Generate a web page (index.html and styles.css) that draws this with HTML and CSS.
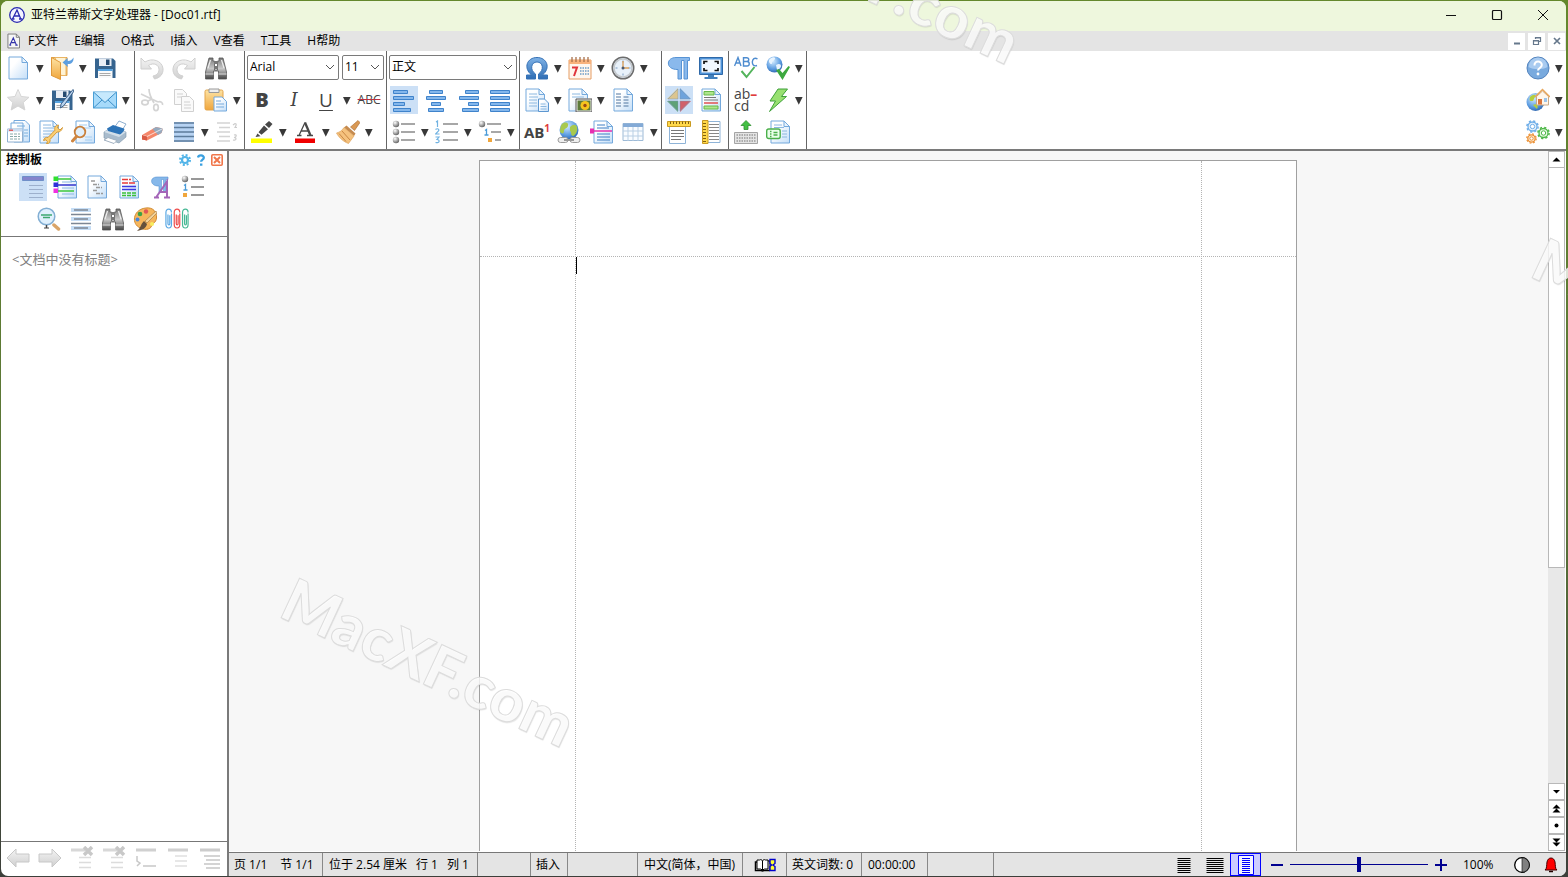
FILE: index.html
```html
<!DOCTYPE html>
<html lang="zh-CN">
<head>
<meta charset="utf-8">
<title>亚特兰蒂斯文字处理器 - [Doc01.rtf]</title>
<link rel="stylesheet" href="styles.css">
</head>
<body>
<svg class="sprite" aria-hidden="true">
  <defs>
    <linearGradient id="gp" x1="0" y1="0" x2="1" y2="1"><stop offset=".3" stop-color="#fff"/><stop offset="1" stop-color="#c3def8"/></linearGradient>
    <linearGradient id="gb" x1="0" y1="0" x2="0" y2="1"><stop offset="0" stop-color="#7fb2e6"/><stop offset="1" stop-color="#2e6db4"/></linearGradient>
    <linearGradient id="gg" x1="0" y1="0" x2="0" y2="1"><stop offset="0" stop-color="#f4f4f4"/><stop offset="1" stop-color="#cfcfcf"/></linearGradient>
    <linearGradient id="go" x1="0" y1="0" x2="0" y2="1"><stop offset="0" stop-color="#fde3a4"/><stop offset="1" stop-color="#f0a63c"/></linearGradient>
    <linearGradient id="gm" x1="0" y1="0" x2="0" y2="1"><stop offset="0" stop-color="#777"/><stop offset=".5" stop-color="#c8c8c8"/><stop offset="1" stop-color="#444"/></linearGradient>
    <radialGradient id="gs" cx=".35" cy=".3" r=".8"><stop offset="0" stop-color="#fff"/><stop offset=".6" stop-color="#9a9a9a"/><stop offset="1" stop-color="#555"/></radialGradient>
    <radialGradient id="gw" cx=".4" cy=".3" r=".8"><stop offset="0" stop-color="#d4ecff"/><stop offset=".6" stop-color="#5b9be0"/><stop offset="1" stop-color="#2458a0"/></radialGradient>
  </defs>
  <symbol id="dd" viewBox="0 0 9 10"><path d="M1 1h7.600L4.800 8.800z" fill="#383838"/></symbol>
  <symbol id="chev" viewBox="0 0 10 6"><path d="M1 1l4 4 4-4" fill="none" stroke="#555"/></symbol>
  <symbol id="appico" viewBox="0 0 18 18"><circle cx="9" cy="9" r="7.300" fill="#f4f4ff" stroke="#2a2ab0" stroke-width="1.300"/><path d="M4.500 13L9 4l3.800 9M6.500 10h5M3.500 13h3M11 13h3.300" fill="none" stroke="#2a2ab0" stroke-width="1.300"/></symbol>
  <symbol id="docico" viewBox="0 0 14 16"><path d="M1 .5h9l3.500 3.500v11.500H1z" fill="#f6f6f6" stroke="#777"/><path d="M10 .5V4h3.500" fill="none" stroke="#777"/><path d="M3 12.500L6.800 4.500l3.400 8M4.800 9.800h4.500M2.500 12.500h2M9 12.500h2.500" fill="none" stroke="#3333aa" stroke-width="1.200"/></symbol>
  <symbol id="page" viewBox="0 0 24 24"><path d="M2 1h13l5.500 5.500V23H2z" fill="url(#gp)" stroke="#74a9dc"/><path d="M15 1v5.500h5.500z" fill="#e8f3fd" stroke="#74a9dc"/></symbol>
  <symbol id="open" viewBox="0 0 24 24"><path d="M1.500 1.500H17v18H1.500z" fill="url(#go)" stroke="#e0a04a"/><path d="M5 1.500h11v18H11z" fill="#fff3d4" stroke="#e9b565"/><path d="M1.500 1.500l9 5V23.500l-9-4z" fill="url(#go)" stroke="#e0993a"/><path d="M23.500 1.500c.5 5-3 7-6 6.500l.5 3L12.500 6.500 17.500 2l.2 3c2.500 0 4.500-1 5.800-3.500z" fill="#5d9fe0"/></symbol>
  <symbol id="save" viewBox="0 0 24 24"><path d="M2 2.500h18l2.500 2.500v17H2z" fill="#36648f"/><path d="M6 2.500h12.500v7.500H6z" fill="#e9eef5"/><path d="M13 3.500h3.500v5.500H13z" fill="#254a70"/><path d="M5 13h14.500v9H5z" fill="#fafafa"/><path d="M5 13h14.500v2H5z" fill="#58a4e0"/><path d="M6.500 17.500h11M6.500 19.500h11" stroke="#aaa"/></symbol>
  <symbol id="star" viewBox="0 0 24 24"><path d="M11 1.500l3.200 7 7.800.8-5.800 5.200 1.700 7.500L11 18l-6.800 4 1.600-7.500L.5 9.300l7.500-.8z" fill="url(#gg)" stroke="#d4d4d4"/></symbol>
  <symbol id="saveas" viewBox="0 0 24 24"><use href="#save"/><path d="M23 1.500l1 1.500L14 17.500l-3.500 2.500.5-4z" fill="#b9d3ee" stroke="#3b5f88"/></symbol>
  <symbol id="mail" viewBox="0 0 24 24"><path d="M.5 4h23v16H.500z" fill="#a6dafa" stroke="#4a9fd6"/><path d="M.5 4L12 14.500 23.500 4M.5 20L9 12M23.500 20L15 12" fill="#d6effd" fill-opacity=".7" stroke="#3d8fc8"/></symbol>
  <symbol id="docs" viewBox="0 0 24 24"><path d="M7 .5h11l4.500 4.500v17H7z" fill="url(#gp)" stroke="#74a9dc"/><path d="M4 3h12v18H4z" fill="url(#gp)" stroke="#74a9dc"/><path d="M.5 9h15v13H.500z" fill="#fff" stroke="#90b0d0"/><path d="M.5 9h15v2.500H.500z" fill="#c9dcf0"/><path d="M2 10.200h4" stroke="#e06060" stroke-width="1.500"/><path d="M3 14h10M3 16.500h10M3 19h10" stroke="#8aa" stroke-dasharray="3 1"/><path d="M10 6h8M17 10h4M17 13h4M17 16h4" stroke="#7bb0de"/></symbol>
  <symbol id="doctool" viewBox="0 0 24 24"><use href="#page" x="-1"/><path d="M4 5h8M4 8h11M4 11h12M4 14h9M4 17h6" stroke="#8cb8e0"/><path d="M23.500 7.500l-2.500 2.500-2.500-2 1-3c-3.500.3-4.500 3-3.500 5.200L9 17.500c-2-.5-4 .5-4.500 3l2.500-.7 1.500 2-1 2c3 0 4-2.300 3.500-4.300l7-7.500c2.500.5 5-1.500 5.500-4.500z" fill="#fbcf73" stroke="#d59a38"/></symbol>
  <symbol id="preview" viewBox="0 0 24 24"><use href="#page" x="3"/><path d="M8 5h8M8 8h12M14 17h7M14 20h7" stroke="#a4cdf0"/><circle cx="9" cy="12" r="5.300" fill="#e0effb" stroke="#c9803c" stroke-width="1.800"/><path d="M5.500 16.500L1.500 21" stroke="#d08640" stroke-width="3" stroke-linecap="round"/></symbol>
  <symbol id="print" viewBox="0 0 24 24"><path d="M11 8l5-7 7 3-5 8z" fill="#fff" stroke="#8fb0d0"/><path d="M1 12l7-4 15 4v5l-7 6-15-5z" fill="#a9bccd" stroke="#7c93a8" stroke-width=".6"/><path d="M1 12l7-4 15 4-7 5z" fill="#d3dfe9"/><path d="M4 8.500L10 5l11 3.500c1 1 0 3-4 6L5 11z" fill="#2d74b8"/><path d="M5 17.500l9 3-3 3-10-3.500z" fill="#fff" stroke="#a0b0c0"/></symbol>
  <symbol id="undo" viewBox="0 0 24 24"><path d="M1 2v11h10.500L8.500 9.500C14 6 19 9 19 13.500c0 4-3 6-6 6.500l1.500 3C20 22 23.500 18 23 12.500 22 4.500 12 1.500 5 6z" fill="url(#gg)" stroke="#cfcfcf"/></symbol>
  <symbol id="redo" viewBox="0 0 24 24"><path d="M23 2v11H12.500l3-3.500C10 6 5 9 5 13.500c0 4 3 6 6 6.500l-1.500 3C4 22 .5 18 1 12.500 2 4.500 12 1.500 19 6z" fill="url(#gg)" stroke="#cfcfcf"/></symbol>
  <symbol id="binoc" viewBox="0 0 24 24"><path d="M5 2h4v3h1.500v9h3V5H15V2h4l3.500 14v7h-8v-8h-5v8h-8v-7z" fill="url(#gm)" stroke="#555" stroke-width=".8"/><path d="M10 5h4v3h-4zM10 10h4v3h-4z" fill="#777"/><path d="M4 12L6.500 4M20 12L17.500 4" stroke="#eee" stroke-width="1.200"/><path d="M1.500 18h8M14.500 18h8" stroke="#ddd"/></symbol>
  <symbol id="cut" viewBox="0 0 24 24"><g fill="none" stroke="#d4d4d4" stroke-width="1.700"><path d="M9 1c0 5 2 9 5 14M1 6l17 8"/><ellipse cx="5" cy="14.500" rx="3.200" ry="2.300"/><ellipse cx="16" cy="19.500" rx="2.300" ry="3.200"/><path d="M8 13l4-2M18 14c3-1 5 1 4.500 3"/></g></symbol>
  <symbol id="copy" viewBox="0 0 24 24"><g fill="#fafafa" stroke="#d0d0d0"><path d="M2.500 1.500h8l4 4v11h-12z"/><path d="M9.500 8.500h8l4 4v11h-12z"/><path d="M5 6h6M5 9h4M12 14h6M12 17h7M12 20h7"/></g></symbol>
  <symbol id="paste" viewBox="0 0 24 24"><rect x="1" y="2" width="18" height="20" rx="1.500" fill="url(#go)" stroke="#e3a54c"/><path d="M5 1h10v3.500H5z" fill="#eee" stroke="#999"/><path d="M10 9h8l4.500 4.500V23H10z" fill="url(#gp)" stroke="#74a9dc"/><path d="M12 13h5M12 16h8M12 19h8" stroke="#74a9dc"/></symbol>
  <symbol id="eraser" viewBox="0 0 24 24"><path d="M2 15L16 7l7 1.500-1.500 4.500L7 20.500l-5-1z" fill="#f5876a"/><path d="M16 7l-3.500 2 5.500 6 3.500-2L23 8.500z" fill="#96a9bd"/><path d="M2 15l5 1.500L23 8.500" fill="none" stroke="#fff" opacity=".7"/><path d="M2 15l5 1.500v4l-5-1z" fill="#d95b45"/></symbol>
  <symbol id="lines" viewBox="0 0 24 24"><path d="M2 2h20v20H2z" fill="#b7d3f3"/><path d="M2 3h20M2 7.500h20M2 12h20M2 16.500h20M2 21h20" stroke="#5d7c9c" stroke-width="1.500"/></symbol>
  <symbol id="sort" viewBox="0 0 24 24"><path d="M2 3h13M4 7.500h11M2 12h13M4 16.500h11M2 21h13" stroke="#d4d4d4" stroke-width="1.600"/><path d="M18 5l2-1.500c2 0 1 2.500 0 4h2M19 15c3-1 3 2 0 2.500 3 0 2.500 3.500-1 2.500" fill="none" stroke="#ccc" stroke-width="1.200"/></symbol>
  <symbol id="hilite" viewBox="0 0 24 24"><path d="M1 18.500h21v4.500H1z" fill="#ffff00"/><path d="M19 1l3.500 3-3.500 4-4-3.500zM14 5.500l4 3.700-6.500 5.600-3-2.600zM7.500 13.500l3 2.700-5 .8z" fill="#484848"/></symbol>
  <symbol id="fcolor" viewBox="0 0 24 24"><path d="M2 18.500h20v4.500H2z" fill="#f00000"/><path d="M6 15.500L12 2.500M8 11h7.500M4 15.500h4.500M14 15.500H20" fill="none" stroke="#484848" stroke-width="1.300"/><path d="M12 2.500l5.500 13" stroke="#484848" stroke-width="2.300"/></symbol>
  <symbol id="brush" viewBox="0 0 24 24"><path d="M22 .5l2 2-5.500 8-4-3.500z" fill="#d99853" stroke="#aa6a30" stroke-width=".6"/><path d="M10.500 5.500l9 8-1.500 2.500L8 7.500z" fill="#c58b50"/><path d="M8 7.500l10 8.500-5.500 7.500C8 22 3 18 .5 13 4 12 6 10.500 8 7.500z" fill="#f5c27e" stroke="#d99a50" stroke-width=".6"/><path d="M3 13.500l7 8M6 11l8 9" stroke="#c98845"/></symbol>
  <symbol id="al" viewBox="0 0 24 24"><g fill="#84b7ec" stroke="#3f83cb"><path d="M1.500 2.500h14v3h-14zM1.500 8.500h20v3h-20zM1.500 14.500h11v3h-11zM1.500 20.500h17v3h-17z"/></g></symbol>
  <symbol id="ac" viewBox="0 0 24 24"><g fill="#84b7ec" stroke="#3f83cb"><path d="M5.500 2.500h13v3h-13zM2.500 8.500h19v3h-19zM7.500 14.500h9v3h-9zM4.500 20.500h15v3h-15z"/></g></symbol>
  <symbol id="ar" viewBox="0 0 24 24"><g fill="#84b7ec" stroke="#3f83cb"><path d="M9.500 2.500h13v3h-13zM3.500 8.500h19v3h-19zM12.500 14.500h10v3h-10zM6.500 20.500h16v3h-16z"/></g></symbol>
  <symbol id="aj" viewBox="0 0 24 24"><g fill="#84b7ec" stroke="#3f83cb"><path d="M2.500 2.500h19v3h-19zM2.500 8.500h19v3h-19zM2.500 14.500h19v3h-19zM2.500 20.500h19v3h-19z"/></g></symbol>
  <symbol id="bul" viewBox="0 0 24 24"><circle cx="4" cy="4" r="3.200" fill="url(#gs)"/><circle cx="4" cy="12" r="3.200" fill="url(#gs)"/><circle cx="4" cy="20" r="3.200" fill="url(#gs)"/><path d="M9 4h14M9 12h14M9 20h14" stroke="#8a8a8a" stroke-width="1.700"/></symbol>
  <symbol id="num" viewBox="0 0 24 24"><path d="M1 2l1.500-1v6M.5 9.500c2-1.500 4-.5 3 1.500l-3 3h4M.5 17h3.500l-2 2.500c3 0 3 4-1.500 3" fill="none" stroke="#70b2e2" stroke-width="1.200"/><path d="M8 4h15M8 12h15M8 20h15" stroke="#8a8a8a" stroke-width="1.700"/></symbol>
  <symbol id="multi" viewBox="0 0 24 24"><circle cx="4" cy="4" r="3.200" fill="url(#gs)"/><path d="M9 4h14M13 12h10M17 20h6" stroke="#8a8a8a" stroke-width="1.700"/><path d="M7 10.500l1.500-1V15M6.500 15h4" fill="none" stroke="#4a9bd8" stroke-width="1.300"/><path d="M10 18h4v4h-4z" fill="#f0a63c"/></symbol>
  <symbol id="omega" viewBox="0 0 24 24"><path d="M1.500 23v-4h5C-2 12 2 1.500 12 1.500S26 12 17.500 19h5v4h-9v-5c6-4 4.500-12-1.500-12S4.500 14 10.500 18v5z" fill="url(#gb)" stroke="#3571b5"/></symbol>
  <symbol id="cal" viewBox="0 0 24 24"><path d="M1 4h22v19H1z" fill="#fff6ee" stroke="#e59c62"/><path d="M1 4h22v4H1z" fill="#f9b27c"/><path d="M4 1v5M8 1v5M12 1v5M16 1v5M20 1v5" stroke="#a8704c" stroke-width="1.300"/><path d="M4 11.500h5l-3 8.500" fill="none" stroke="#e0343c" stroke-width="2"/><path d="M12 12h9M12 15h9M12 18h9" stroke="#6d9dc8" stroke-width="1.500" stroke-dasharray="1.500 1"/></symbol>
  <symbol id="clock" viewBox="0 0 24 24"><circle cx="12" cy="12" r="10.700" fill="#e2edf8" stroke="#6c6c6c" stroke-width="1.600"/><circle cx="12" cy="12" r="9" fill="#e8f1fa" stroke="#c4c8cc" stroke-width="1.500"/><path d="M12 4.500v2M12 17.500v2M4.500 12h2M17.500 12h2" stroke="#7d9cc0"/><path d="M12 5v7h6" fill="none" stroke="#d9a05c" stroke-width="1.400"/><circle cx="12" cy="12" r="1.500" fill="#4a5a70"/></symbol>
  <symbol id="fields" viewBox="0 0 24 24"><use href="#page" x="-1"/><path d="M4 6h8M4 9h9M4 12h8M4 15h8M4 18h8" stroke="#8cb8e0"/><path d="M13.500 11h6l4 4v8.500h-10z" fill="url(#gp)" stroke="#5d97d0"/><path d="M15.500 16h5M15.500 18.500h6M15.500 21h6" stroke="#8cb8e0"/></symbol>
  <symbol id="pic" viewBox="0 0 24 24"><use href="#page" x="-1"/><path d="M4 6h8M4 9h12" stroke="#8cb8e0"/><path d="M8.500 11.500h15v12h-15z" fill="#5d7a3a" stroke="#eee" stroke-width="2"/><path d="M8 11h16v13H8z" fill="none" stroke="#555"/><circle cx="17" cy="17.500" r="4.500" fill="#f7c51e"/><circle cx="17" cy="17.500" r="1.700" fill="#9a4a14"/></symbol>
  <symbol id="cols" viewBox="0 0 24 24"><use href="#page" x="1"/><path d="M5 6h5M5 9h5M5 12h5M5 15h5M5 18h5M12.500 9h5M12.500 12h5M12.500 15h5M12.500 18h5" stroke="#51779f" stroke-width="1.200"/></symbol>
  <symbol id="globe" viewBox="0 0 24 24"><circle cx="12" cy="10" r="9.500" fill="url(#gw)"/><path d="M5 4c4-3 7-1 6 2s-4 2-4 5-2 3-4 1C3 8 4 5 5 4zM13 7c3-3 6-3 7 0s-1 8-4 9c-3-1-1-4-3-5z" fill="#a8c94e"/><g fill="none" stroke="#999"><rect x="1" y="17.500" width="10" height="5" rx="2.500" fill="#eee"/><rect x="13" y="17.500" width="10" height="5" rx="2.500" fill="#eee"/><path d="M7 20h10" stroke-width="2"/></g></symbol>
  <symbol id="brk" viewBox="0 0 24 24"><use href="#page" x="3"/><path d="M8 5h8M8 8h12M8 14h13M8 17h13M8 20h13" stroke="#3f7fc4"/><path d="M1 8.500h4v5H1z" fill="#e62fb0"/><path d="M4 11h19" stroke="#e62fb0" stroke-width="1.500"/></symbol>
  <symbol id="table" viewBox="0 0 24 24"><path d="M2 3.500h20v17H2z" fill="#f9fcff" stroke="#9dbad6"/><path d="M2 3.500h20v3.500H2z" fill="#83aad6"/><path d="M2 11h20M2 16h20M7 7v14M12 7v14M17 7v14" stroke="#b9cfe4"/></symbol>
  <symbol id="pilcrow" viewBox="0 0 24 24"><path d="M9 1.500h13.500v3h-2V23h-3.500V4.500h-2.500V23H11V13.500C-1.500 14-1.500 1.500 9 1.500z" fill="#8ab9ec" stroke="#5793d4"/></symbol>
  <symbol id="full" viewBox="0 0 24 24"><path d="M.5 1.500h23v17H.500z" fill="#4f93d8" stroke="#2f69a8"/><path d="M2.500 3.500h19v13h-19z" fill="#f2f8ff"/><path d="M5 8V5.500h3.500M15.500 5.500H19V8M19 12v2.500h-3.500M8.500 14.500H5V12" fill="none" stroke="#111" stroke-width="1.700"/><path d="M9 19h6v2.500H9zM5.500 21h13v2h-13z" fill="#4280bd"/></symbol>
  <symbol id="tri" viewBox="0 0 24 24"><path d="M11 0v11H0z" fill="#dcc58f"/><path d="M13 0v11h11z" fill="#6ea3dc"/><path d="M11 24V13H0z" fill="#5fa276"/><path d="M13 24V13h11z" fill="#d0606a"/><path d="M11 1v10H1zM13 1v10h10zM11 23V13H1zM13 23V13h10z" fill="none" stroke="#7b96b3" stroke-width=".5"/></symbol>
  <symbol id="hf" viewBox="0 0 24 24"><use href="#page" x="1"/><path d="M5 3.500h10v3.500H5zM5 18h14v3H5z" fill="#aee58c" stroke="#67b94a"/><path d="M5 9.500h12M5 12h14" stroke="#777"/><path d="M5 15h14" stroke="#e05050" stroke-width="1.300"/></symbol>
  <symbol id="rulh" viewBox="0 0 24 24"><path d="M2.500 6h16v17.500h-16z" fill="#fff" stroke="#8fb4d8"/><path d="M4 10.500h13M4 13.500h13M4 16.500h13M4 19.500h10" stroke="#777"/><path d="M.5 1.500h23v5H.500z" fill="#ffd84a" stroke="#c99a20"/><path d="M3.500 1.500v2.500M6.500 1.500v2.500M9.500 1.500v2.500M12.500 1.500v2.500M15.500 1.500v2.500M18.500 1.500v2.500M21.500 1.500v2.500" stroke="#806010"/></symbol>
  <symbol id="rulv" viewBox="0 0 24 24"><path d="M8 1.500h13v21H8z" fill="#fff" stroke="#8fb4d8"/><path d="M10 4.500h10M10 7.500h10M10 10.500h10M10 13.500h10M10 16.500h10M10 19.500h10" stroke="#888"/><path d="M3.500.5H9v23H3.500z" fill="#ffd84a" stroke="#c99a20"/><path d="M4 3.500h3M4 6.500h3M4 9.500h3M4 12.500h3M4 15.500h3M4 18.500h3M4 21.500h3" stroke="#806010"/></symbol>
  <symbol id="spell" viewBox="0 0 24 24"><path d="M.5 10L4 1.500 7 10M1.800 7h4.500M9.500 10V1.700h3c3 0 3 3.800 0 3.800h-3 3.500c3 0 3 4.500 0 4.500zM23.500 3c-6-4-7.500 9-.5 6.500" fill="none" stroke="#4e8ccf" stroke-width="1.400"/><path d="M7.500 15l5 6 8-10" fill="none" stroke="#54b45c" stroke-width="2"/></symbol>
  <symbol id="webspell" viewBox="0 0 24 24"><circle cx="8.500" cy="8.500" r="8" fill="url(#gw)"/><path d="M3 4c3-4 7-3 6-1s-3 2-3 4-2 1-3-1zM10 9c3-2 5-1 5 1s-3 4-4 4z" fill="#e8f4ff"/><path d="M10 14l3-1 3.500 4 6-7 1.500 1-7.500 13z" fill="#3da83f"/></symbol>
  <symbol id="bolt" viewBox="0 0 24 24"><path d="M12 1h9.500l-6 7.500h5L3.500 23.500 9.500 13H4z" fill="#98e070" stroke="#3fa03a"/></symbol>
  <symbol id="kbd" viewBox="0 0 24 24"><path d="M12 .5l5 5h-3v4h-4v-4H7z" fill="#43c043" stroke="#2d8f2d" stroke-width=".8"/><path d="M.5 12.500h23v11H.500z" fill="#e4e4e4" stroke="#a4a4a4"/><path d="M2.500 15h19M2.500 18h19M2.500 21h19" stroke="#999" stroke-width="1.500" stroke-dasharray="1.500 1"/></symbol>
  <symbol id="ctrl" viewBox="0 0 24 24"><use href="#page" x="3"/><path d="M8 5h8M8 7.500h10M16 11h5M16 14h5M16 17h5" stroke="#8cb8e0"/><rect x=".700" y="9" width="13.500" height="9.500" rx="2" fill="#eaffea" stroke="#4bb04b" stroke-width="1.400"/><path d="M4 11.500h1.500M4 14h1.500M4 16.500h1.500M7.500 12.500h4M7.500 15h4" stroke="#4bb04b" stroke-width="1.300"/></symbol>
  <symbol id="help" viewBox="0 0 24 24"><circle cx="12" cy="12" r="11" fill="#79aade" stroke="#5584bd"/><path d="M2.500 11a9.500 9.500 0 0 1 19 0c-5 3-14 3-19 0z" fill="#a9cbf0"/><path d="M8.500 9.500c-.5-5.500 7.500-5 7.300-.5 0 3-3.800 3-3.800 5.500" fill="none" stroke="#fff" stroke-width="2"/><circle cx="12" cy="18" r="1.400" fill="#fff"/></symbol>
  <symbol id="home" viewBox="0 0 24 24"><circle cx="9.500" cy="14" r="9" fill="url(#gw)"/><path d="M4 9c3-3 7-3 5 0s-1 4-3 4-3 0-2-4zM7 17c3-2 6 0 4 4z" fill="#b4cf3c"/><path d="M10.500 8.500L16.500 3l6 5.500V17h-12z" fill="#fff6ea" stroke="#c8a888"/><path d="M9 9l7.500-7.500L24 9" fill="none" stroke="#e8a75c" stroke-width="1.500"/><path d="M12 11h4v5.500h-4z" fill="#d9743c"/><path d="M18 10h3v4h-3z" fill="#9cc4ea"/></symbol>
  <symbol id="gears" viewBox="0 0 24 24"><g fill="none"><circle cx="6.500" cy="6.500" r="4.500" fill="#e5f1fc" stroke="#6faee8" stroke-width="1.300"/><circle cx="6.500" cy="6.500" r="5.600" stroke="#6faee8" stroke-width="1.500" stroke-dasharray="2.200 2.200"/><circle cx="6.500" cy="6.500" r="2.200" fill="#fff" stroke="#6faee8"/><circle cx="17.500" cy="13" r="4.500" fill="#e5f8e0" stroke="#4fb84a" stroke-width="1.300"/><circle cx="17.500" cy="13" r="5.600" stroke="#4fb84a" stroke-width="1.500" stroke-dasharray="2.200 2.200"/><circle cx="17.500" cy="13" r="2.200" fill="#fff" stroke="#4fb84a"/><circle cx="5.500" cy="18.500" r="3.700" fill="#fdebd3" stroke="#ec9136" stroke-width="1.300"/><circle cx="5.500" cy="18.500" r="4.700" stroke="#ec9136" stroke-width="1.300" stroke-dasharray="1.850 1.850"/><circle cx="5.500" cy="18.500" r="1.700" fill="#fff" stroke="#ec9136"/></g></symbol>
  <symbol id="gear" viewBox="0 0 12 12"><circle cx="6" cy="6" r="3" fill="none" stroke="#52b4e8" stroke-width="2.200"/><circle cx="6" cy="6" r="5" fill="none" stroke="#52b4e8" stroke-width="2" stroke-dasharray="2 1.930"/></symbol>
  <symbol id="qm" viewBox="0 0 12 12"><path d="M3 3.500C3.500.5 9 .7 8.800 3.800c0 1.900-2.700 1.800-2.700 4" fill="none" stroke="#3aa0e0" stroke-width="2.300"/><path d="M5 9.500h2.400v2.200H5z" fill="#3aa0e0"/></symbol>
  <symbol id="xb" viewBox="0 0 12 12"><rect x=".800" y=".800" width="10.400" height="10.400" rx="1" fill="#fff" stroke="#f0764a" stroke-width="1.600"/><path d="M3 3l6 6M9 3L3 9" stroke="#f0764a" stroke-width="2"/></symbol>
  <symbol id="p1" viewBox="0 0 24 24"><path d="M1.500 1.500h21v4h-21z" fill="#8584cc" stroke="#6f8fc8"/><path d="M8 10.500h14M8 14.500h14M8 18.500h14M8 22.500h14" stroke="#9db0cc" stroke-width="1.200"/></symbol>
  <symbol id="p2" viewBox="0 0 24 24"><use href="#page" x="3"/><path d="M4 4h14M4 16h17" stroke="#3dc83d" stroke-width="1.300"/><path d="M4 10h19" stroke="#3333cc" stroke-width="1.500"/><path d="M9 7h10M9 13h12M9 19h12" stroke="#8cb8e0"/><path d="M.5 1.500h4.500v4.500H.500z" fill="#30e030"/><path d="M.5 7.500h4.500v4.500H.500z" fill="#3030d8"/><path d="M.5 13.500h4.500V18H.500z" fill="#f030e0"/></symbol>
  <symbol id="p3" viewBox="0 0 24 24"><use href="#page" x="1"/><path d="M6 6h5M8 9.500h6M11 12.500h6M8 15.500h5M11 18.500h7" stroke="#999" stroke-width="1.400" stroke-dasharray="4 1"/></symbol>
  <symbol id="p4" viewBox="0 0 24 24"><use href="#page" x="1"/><path d="M5 4.500h9M5 8h13" stroke="#e83a3a" stroke-width="1.500" stroke-dasharray="6 1"/><path d="M5 11.500h14M5 14.500h14" stroke="#3a3ae0" stroke-width="1.500"/><path d="M5 18h14M5 20.500h14" stroke="#3ac03a" stroke-width="1.300" stroke-dasharray="4 1"/></symbol>
  <symbol id="p5" viewBox="0 0 24 24"><path d="M8 2h11v2.500h-2V17h-2.500V4.500h-2V17H10v-6C1 11.500 0 2 8 2z" fill="#86b8ea" stroke="#5b96d4" stroke-width=".6"/><path d="M7 22.500L18 6.500v16M11 17h7M5 22.500h5M15 22.500h6" fill="none" stroke="#a465b8" stroke-width="2"/></symbol>
  <symbol id="p6" viewBox="0 0 24 24"><circle cx="4" cy="4" r="3.200" fill="url(#gs)"/><path d="M10 4h13M10 12h13M10 20h13" stroke="#777" stroke-width="1.600"/><path d="M3 10.500l1.500-1V15M2.500 15h4" fill="none" stroke="#4a9bd8" stroke-width="1.300"/><path d="M2 18h4v4H2z" fill="#f0a63c"/></symbol>
  <symbol id="p7" viewBox="0 0 24 24"><path d="M17 18l4.500 4" stroke="#d9a468" stroke-width="3.500" stroke-linecap="round"/><circle cx="9.500" cy="9.500" r="8.300" fill="#dff0fd" stroke="#83afd4" stroke-width="1.500"/><path d="M4 8h11M6 10.500h7" stroke="#3da870" stroke-width="1.500"/><path d="M9.500 18v3" stroke="#444" stroke-width="1.500"/><path d="M7 21h5" stroke="#444"/></symbol>
  <symbol id="p8" viewBox="0 0 24 24"><path d="M2 1h20v4H2zM2 10h20v4H2zM2 19h20v4H2z" fill="#c6def6"/><path d="M5 3h14M2 7.500h20M5 12h14M2 16.500h20M5 21h14" stroke="#7d8794" stroke-width="1.300"/></symbol>
  <symbol id="p9" viewBox="0 0 24 24"><path d="M13 1c7-1 11 4 10.500 10-.5 5-4 5-5 8-1 4-8 4.500-13 1C-2 15 1 2 13 1z" fill="#f6b65c" stroke="#d08a34"/><circle cx="7" cy="7" r="2.300" fill="#3fa046"/><circle cx="13" cy="4.500" r="2.200" fill="#e25656"/><circle cx="4.500" cy="12.500" r="2" fill="#4b86d8"/><circle cx="19" cy="17" r="2" fill="#f8ee60"/><path d="M23 4L12 14l2 2L24 6z" fill="#f2d39c" stroke="#a07440" stroke-width=".6"/><path d="M11 14l3 3c-1 4-4 6-10 7 4-3 3-6 7-10z" fill="#64503c"/></symbol>
  <symbol id="p10" viewBox="0 0 26 24"><g fill="none" stroke-width="1.300"><path d="M7 6v12c0 5-6 5-6 0V5c0-5 6-5 6 0M3.200 7v10c0 2 2 2 2 0V8" stroke="#5aa8e4"/><path d="M16 6v12c0 5-6 5-6 0V5c0-5 6-5 6 0M12.200 7v10c0 2 2 2 2 0V8" stroke="#ee4a4a"/><path d="M25 6v12c0 5-6 5-6 0V5c0-5 6-5 6 0M21.200 7v10c0 2 2 2 2 0V8" stroke="#46b894"/></g></symbol>
  <symbol id="nl" viewBox="0 0 24 24"><path d="M1 12l9-9v5h13v8H10v5z" fill="url(#gg)" stroke="#c8c8c8"/></symbol>
  <symbol id="nr" viewBox="0 0 24 24"><path d="M23 12l-9-9v5H1v8h13v5z" fill="url(#gg)" stroke="#c8c8c8"/></symbol>
  <symbol id="n1" viewBox="0 0 24 24"><path d="M1 2.500h14v3H1z" fill="#d8d8d8"/><path d="M9 11.500h12M9 16.500h12M9 21.500h12" stroke="#dcdcdc" stroke-width="1.600"/><path d="M14 1l8 8M22 1l-8 8" stroke="#c8c8c8" stroke-width="3.500"/></symbol>
  <symbol id="n3" viewBox="0 0 24 24"><path d="M2 2.500h20v3H2z" fill="#d0d0d0"/><path d="M3 10v5l3 2-3 3M9 20h13" fill="none" stroke="#c8c8c8" stroke-width="1.500"/></symbol>
  <symbol id="n4" viewBox="0 0 24 24"><path d="M2 2.500h20v3H2z" fill="#d0d0d0"/><path d="M9 10h12M9 15h12M9 20h12" stroke="#e0e0e0" stroke-width="1.600"/></symbol>
  <symbol id="n5" viewBox="0 0 24 24"><path d="M2 2.500h20v3H2z" fill="#ccc"/><path d="M6 10h16M8 14h14M6 18h16M8 22h14" stroke="#d4d4d4" stroke-width="2"/></symbol>
</svg>

<div class="window">
  <header class="titlebar">
    <svg class="i18"><use href="#appico"/></svg>
    <h1>亚特兰蒂斯文字处理器 - [Doc01.rtf]</h1>
    <div class="winbtns">
      <button aria-label="最小化"><svg viewBox="0 0 12 12"><path d="M1 6.500h10" stroke="#111"/></svg></button>
      <button aria-label="最大化"><svg viewBox="0 0 12 12"><rect x="1.500" y="1.500" width="9" height="9" rx="1" fill="none" stroke="#111" stroke-width="1.200"/></svg></button>
      <button aria-label="关闭"><svg viewBox="0 0 12 12"><path d="M1 1l10 10M11 1L1 11" stroke="#111"/></svg></button>
    </div>
  </header>

  <nav class="menubar">
    <svg class="docicon"><use href="#docico"/></svg>
    <button>F文件</button><button>E编辑</button><button>O格式</button><button>I插入</button><button>V查看</button><button>T工具</button><button>H帮助</button>
    <div class="mdibtns">
      <button aria-label="最小化文档"><svg viewBox="0 0 10 10"><path d="M2 7.500h6" stroke="#66788c" stroke-width="2"/></svg></button>
      <button aria-label="还原文档"><svg viewBox="0 0 10 10"><path d="M3.500 3V1.500h5v4H7M1.500 4.500h5v4h-5zM1.500 5h5M3.500 2h5" fill="none" stroke="#66788c" stroke-width="1.200"/></svg></button>
      <button aria-label="关闭文档"><svg viewBox="0 0 10 10"><path d="M2 2l6 6M8 2L2 8" stroke="#66788c" stroke-width="1.700"/></svg></button>
    </div>
  </nav>

  <div class="toolbar">
    <div class="group">
      <div class="row"><button class="tb" aria-label="新建"><svg><use href="#page"/></svg></button><button class="dd" aria-label="新建选项"><svg><use href="#dd"/></svg></button><button class="tb" aria-label="打开"><svg><use href="#open"/></svg></button><button class="dd" aria-label="打开选项"><svg><use href="#dd"/></svg></button><button class="tb" aria-label="保存"><svg><use href="#save"/></svg></button></div>
      <div class="row"><button class="tb" aria-label="收藏"><svg><use href="#star"/></svg></button><button class="dd" aria-label="收藏选项"><svg><use href="#dd"/></svg></button><button class="tb" aria-label="另存为"><svg><use href="#saveas"/></svg></button><button class="dd" aria-label="另存为选项"><svg><use href="#dd"/></svg></button><button class="tb" aria-label="邮件"><svg><use href="#mail"/></svg></button><button class="dd" aria-label="邮件选项"><svg><use href="#dd"/></svg></button></div>
      <div class="row"><button class="tb" aria-label="文档窗口"><svg><use href="#docs"/></svg></button><button class="tb" aria-label="页面设置"><svg><use href="#doctool"/></svg></button><button class="tb" aria-label="打印预览"><svg><use href="#preview"/></svg></button><button class="tb" aria-label="打印"><svg><use href="#print"/></svg></button></div>
    </div>
    <div class="group">
      <div class="row"><button class="tb" aria-label="撤消"><svg><use href="#undo"/></svg></button><button class="tb" aria-label="重做"><svg><use href="#redo"/></svg></button><button class="tb" aria-label="查找"><svg><use href="#binoc"/></svg></button></div>
      <div class="row"><button class="tb" aria-label="剪切"><svg><use href="#cut"/></svg></button><button class="tb" aria-label="复制"><svg><use href="#copy"/></svg></button><button class="tb" aria-label="粘贴"><svg><use href="#paste"/></svg></button><button class="dd" aria-label="粘贴选项"><svg><use href="#dd"/></svg></button></div>
      <div class="row"><button class="tb" aria-label="清除"><svg><use href="#eraser"/></svg></button><button class="tb" aria-label="选择"><svg><use href="#lines"/></svg></button><button class="dd" aria-label="选择选项"><svg><use href="#dd"/></svg></button><button class="tb" aria-label="排序"><svg><use href="#sort"/></svg></button></div>
    </div>
    <div class="group">
      <div class="row combos">
        <div class="combo font"><select aria-label="字体"><option>Arial</option></select><svg><use href="#chev"/></svg></div>
        <div class="combo size"><select aria-label="字号"><option>11</option></select><svg><use href="#chev"/></svg></div>
      </div>
      <div class="row"><button class="tb glyph b">B</button><button class="tb glyph i">I</button><button class="tb glyph u">U</button><button class="dd" aria-label="下划线选项"><svg><use href="#dd"/></svg></button><button class="tb abc"><s>ABC</s></button></div>
      <div class="row"><button class="tb" aria-label="突出显示"><svg><use href="#hilite"/></svg></button><button class="dd" aria-label="突出显示颜色"><svg><use href="#dd"/></svg></button><button class="tb" aria-label="字体颜色"><svg><use href="#fcolor"/></svg></button><button class="dd" aria-label="字体颜色选项"><svg><use href="#dd"/></svg></button><button class="tb" aria-label="格式刷"><svg><use href="#brush"/></svg></button><button class="dd" aria-label="格式刷选项"><svg><use href="#dd"/></svg></button></div>
    </div>
    <div class="group">
      <div class="row combos"><div class="combo style"><select aria-label="样式"><option>正文</option></select><svg><use href="#chev"/></svg></div></div>
      <div class="row"><button class="tb on" aria-label="左对齐"><svg><use href="#al"/></svg></button><button class="tb" aria-label="居中"><svg><use href="#ac"/></svg></button><button class="tb" aria-label="右对齐"><svg><use href="#ar"/></svg></button><button class="tb" aria-label="两端对齐"><svg><use href="#aj"/></svg></button></div>
      <div class="row"><button class="tb" aria-label="项目符号"><svg><use href="#bul"/></svg></button><button class="dd" aria-label="项目符号选项"><svg><use href="#dd"/></svg></button><button class="tb" aria-label="编号"><svg><use href="#num"/></svg></button><button class="dd" aria-label="编号选项"><svg><use href="#dd"/></svg></button><button class="tb" aria-label="多级列表"><svg><use href="#multi"/></svg></button><button class="dd" aria-label="多级列表选项"><svg><use href="#dd"/></svg></button></div>
    </div>
    <div class="group">
      <div class="row"><button class="tb" aria-label="符号"><svg><use href="#omega"/></svg></button><button class="dd" aria-label="符号选项"><svg><use href="#dd"/></svg></button><button class="tb" aria-label="日期"><svg><use href="#cal"/></svg></button><button class="dd" aria-label="日期选项"><svg><use href="#dd"/></svg></button><button class="tb" aria-label="时间"><svg><use href="#clock"/></svg></button><button class="dd" aria-label="时间选项"><svg><use href="#dd"/></svg></button></div>
      <div class="row"><button class="tb" aria-label="插入文件"><svg><use href="#fields"/></svg></button><button class="dd" aria-label="插入文件选项"><svg><use href="#dd"/></svg></button><button class="tb" aria-label="图片"><svg><use href="#pic"/></svg></button><button class="dd" aria-label="图片选项"><svg><use href="#dd"/></svg></button><button class="tb" aria-label="分栏"><svg><use href="#cols"/></svg></button><button class="dd" aria-label="分栏选项"><svg><use href="#dd"/></svg></button></div>
      <div class="row"><button class="tb note">AB<sup>1</sup></button><button class="tb" aria-label="超链接"><svg><use href="#globe"/></svg></button><button class="tb" aria-label="分隔符"><svg><use href="#brk"/></svg></button><button class="tb" aria-label="表格"><svg><use href="#table"/></svg></button><button class="dd" aria-label="表格选项"><svg><use href="#dd"/></svg></button></div>
    </div>
    <div class="group">
      <div class="row"><button class="tb" aria-label="显示标记"><svg><use href="#pilcrow"/></svg></button><button class="tb" aria-label="全屏"><svg><use href="#full"/></svg></button></div>
      <div class="row"><button class="tb on" aria-label="控制板"><svg><use href="#tri"/></svg></button><button class="tb" aria-label="页眉页脚"><svg><use href="#hf"/></svg></button></div>
      <div class="row"><button class="tb" aria-label="水平标尺"><svg><use href="#rulh"/></svg></button><button class="tb" aria-label="垂直标尺"><svg><use href="#rulv"/></svg></button></div>
    </div>
    <div class="group">
      <div class="row"><button class="tb" aria-label="拼写检查"><svg><use href="#spell"/></svg></button><button class="tb" aria-label="语言"><svg><use href="#webspell"/></svg></button><button class="dd" aria-label="语言选项"><svg><use href="#dd"/></svg></button></div>
      <div class="row"><button class="tb hyph"><span>ab<i>–</i></span><span>cd</span></button><button class="tb" aria-label="自动更正"><svg><use href="#bolt"/></svg></button><button class="dd" aria-label="自动更正选项"><svg><use href="#dd"/></svg></button></div>
      <div class="row"><button class="tb" aria-label="键盘"><svg><use href="#kbd"/></svg></button><button class="tb" aria-label="文档信息"><svg><use href="#ctrl"/></svg></button></div>
    </div>
    <div class="group last">
      <div class="row"><button class="tb" aria-label="帮助"><svg><use href="#help"/></svg></button><button class="dd" aria-label="帮助选项"><svg><use href="#dd"/></svg></button></div>
      <div class="row"><button class="tb" aria-label="主页"><svg><use href="#home"/></svg></button><button class="dd" aria-label="主页选项"><svg><use href="#dd"/></svg></button></div>
      <div class="row"><button class="tb" aria-label="选项"><svg><use href="#gears"/></svg></button><button class="dd" aria-label="更多选项"><svg><use href="#dd"/></svg></button></div>
    </div>
  </div>

  <div class="main">
    <aside class="panel">
      <div class="panelhead"><h2>控制板</h2><button aria-label="设置"><svg><use href="#gear"/></svg></button><button aria-label="面板帮助"><svg><use href="#qm"/></svg></button><button aria-label="关闭面板"><svg><use href="#xb"/></svg></button></div>
      <div class="paneltools">
        <div class="row"><button class="tb on" aria-label="标题"><svg><use href="#p1"/></svg></button><button class="tb" aria-label="书签"><svg><use href="#p2"/></svg></button><button class="tb" aria-label="节"><svg><use href="#p3"/></svg></button><button class="tb" aria-label="字段"><svg><use href="#p4"/></svg></button><button class="tb" aria-label="样式面板"><svg><use href="#p5"/></svg></button><button class="tb" aria-label="列表"><svg><use href="#p6"/></svg></button></div>
        <div class="row"><button class="tb" aria-label="缩放"><svg><use href="#p7"/></svg></button><button class="tb" aria-label="选段"><svg><use href="#p8"/></svg></button><button class="tb" aria-label="搜索"><svg><use href="#binoc"/></svg></button><button class="tb" aria-label="调色板"><svg><use href="#p9"/></svg></button><button class="tb" aria-label="剪贴"><svg><use href="#p10"/></svg></button></div>
      </div>
      <p class="empty">&lt;文档中没有标题&gt;</p>
      <div class="panelnav"><button class="tb" aria-label="上一个" disabled><svg><use href="#nl"/></svg></button><button class="tb" aria-label="下一个" disabled><svg><use href="#nr"/></svg></button><button class="tb" aria-label="删除标题" disabled><svg><use href="#n1"/></svg></button><button class="tb" aria-label="删除章节" disabled><svg><use href="#n1"/></svg></button><button class="tb" aria-label="折叠" disabled><svg><use href="#n3"/></svg></button><button class="tb" aria-label="选择标题" disabled><svg><use href="#n4"/></svg></button><button class="tb" aria-label="选择章节" disabled><svg><use href="#n5"/></svg></button></div>
    </aside>

    <div class="work">
      <div class="docarea">
        <main class="desk"><div class="page"><div class="text" role="textbox" aria-label="文档" contenteditable="true"><span class="caret"></span></div></div></main>
        <div class="scroll">
          <button aria-label="向上滚动"><svg viewBox="0 0 9 9"><path d="M.5 6.500h8L4.500 2.500z"/></svg></button>
          <div class="track"><div class="thumb"></div></div>
          <button aria-label="向下滚动"><svg viewBox="0 0 9 9"><path d="M1 3h7L4.500 6.500z"/></svg></button>
          <button aria-label="上一页"><svg viewBox="0 0 9 9"><path d="M.5 4.500h8l-4-4zM.5 8.500h8l-4-4z"/></svg></button>
          <button aria-label="选择浏览对象"><svg viewBox="0 0 9 9"><circle cx="4.500" cy="4.500" r="2"/></svg></button>
          <button aria-label="下一页"><svg viewBox="0 0 9 9"><path d="M.5.5h8l-4 4zM.5 4.500h8l-4 4z"/></svg></button>
        </div>
      </div>
      <footer class="status">
        <div class="cell c1"><span>页 1/1</span><span>节 1/1</span></div>
        <div class="cell c2"><span>位于 2.54 厘米</span><span>行 1</span><span>列 1</span></div>
        <div class="cell c3"></div>
        <div class="cell c4">插入</div>
        <div class="cell c5"></div>
        <div class="cell c6">中文(简体，中国)</div>
        <div class="cell c7"><svg class="book" viewBox="0 0 22 14"><path d="M3 2h2.500C7 1 8 2 8.500 3 9 2 10 1 11.500 2H14v9h-3.500l-2 1-2-1H3z" fill="#fff" stroke="#000"/><path d="M3 4H1.500v8.500H7l1.500.5 1.500-.5h6" fill="none" stroke="#000" stroke-width="1.500"/><path d="M8.500 3v9M14 3h2v9" stroke="#000" fill="none"/><path d="M16 1.500h5v4l-2 1.500 2 1.500v4h-5V8.500L17.500 7 16 5.500z" fill="#ffff30" stroke="#00c" stroke-width="1.400"/></svg></div>
        <div class="cell c8">英文词数: 0</div>
        <div class="cell c9">00:00:00</div>
        <div class="cell c9"></div>
        <div class="statusright">
          <button class="view" aria-label="草稿视图"><svg viewBox="0 0 18 16"><path d="M2.500 1.500h13M2.500 3.500h13M2.500 5.500h13M2.500 7.500h13M2.500 9.500h13M2.500 11.500h13M2.500 13.500h13M2.500 15.500h13" stroke="#000"/></svg></button>
          <button class="view" aria-label="联机视图"><svg viewBox="0 0 18 16"><path d="M.5 1.500h17M.5 3.500h17M.5 5.500h17M.5 7.500h17M.5 9.500h17M.5 11.500h17M.5 13.500h17M.5 15.500h17" stroke="#000"/></svg></button>
          <button class="view sel" aria-label="页面视图"><svg viewBox="0 0 18 20"><path d="M1.500.5h15v19h-15z" fill="#f4f4ff" stroke="#00f"/><path d="M5 3.500h8M5 5.500h8M5 7.500h8M5 9.500h8M5 11.500h8M5 13.500h8M5 15.500h8M5 17.500h8" stroke="#00f"/></svg></button>
          <button class="zoombtn" aria-label="缩小"><svg viewBox="0 0 12 12"><path d="M0 6h12" stroke="#000090" stroke-width="2"/></svg></button>
          <input class="zoom" type="range" min="0" max="200" value="100" aria-label="缩放比例">
          <button class="zoombtn" aria-label="放大"><svg viewBox="0 0 12 12"><path d="M0 6h12M6 0v12" stroke="#000090" stroke-width="2"/></svg></button>
          <span class="pct">100%</span>
          <button class="sbtn" aria-label="对比度"><svg viewBox="0 0 18 18"><circle cx="9" cy="9" r="7.300" fill="#fff" stroke="#000" stroke-width="1.300"/><path d="M9 1.700a7.300 7.300 0 0 1 0 14.600z" fill="#808080" stroke="#000" stroke-width=".6"/></svg></button>
          <button class="sbtn" aria-label="通知"><svg viewBox="0 0 18 18"><path d="M3 14c2-1 1.500-5 2-8 .5-2.500 2-4 4-4s3.500 1.500 4 4c.5 3 0 7 2 8z" fill="#f00" stroke="#400"/><path d="M7 15.500h4" stroke="#200" stroke-width="1.500"/></svg></button>
        </div>
      </footer>
    </div>
  </div>
</div>
<div class="marks" aria-hidden="true"><span class="mark m1">MacXF.com</span><span class="mark m2">MacXF.com</span><span class="mark m3">MacXF.com</span></div>
</body>
</html>
```

FILE: styles.css
```css
* { box-sizing: border-box; }
html, body { height: 100%; }
body {
  margin: 0;
  padding: 1px 2px 1px 1px;
  background: linear-gradient(to bottom, #64882c, #587238 60%, #3c3f3a);
  font: 12px/16px "Open Sans", "Noto Sans CJK SC", sans-serif;
  color: #000;
  overflow: hidden;
}
h1, h2, p { margin: 0; font-size: 12px; font-weight: normal; }
button {
  margin: 0; padding: 0; border: 0; background: none;
  font: inherit; color: inherit;
  display: flex; align-items: center; justify-content: center;
}
svg { display: block; flex: none; }
.sprite { position: absolute; width: 0; height: 0; }

.window {
  display: flex; flex-direction: column;
  height: 100%;
  background: #fff;
  border-radius: 7px;
  overflow: hidden;
}

.titlebar { display: flex; align-items: center; flex: none; height: 30px; padding: 0 0 2px 7px; background: #eef7dd; }
.i18 { width: 18px; height: 18px; margin-right: 5px; }
.winbtns { display: flex; margin-left: auto; }
.winbtns button { width: 46px; height: 28px; }
.winbtns svg { width: 12px; height: 12px; }

.menubar { display: flex; align-items: center; flex: none; height: 20px; padding-left: 6px; background: #e4e4e4; }
.docicon { width: 13px; height: 16px; }
.menubar > button { padding: 0 8px; }
.mdibtns { display: flex; gap: 3px; margin-left: auto; padding-right: 1px; }
.mdibtns button { width: 17px; height: 17px; background: #fff; }
.mdibtns svg { width: 10px; height: 10px; }

.toolbar { display: flex; flex: none; height: 100px; border-bottom: 2px solid #7a7a7a; }
.group { padding: 1px 1px 0; border-right: 1px solid #666; }
.group:first-child { padding-right: 2px; padding-left: 2px; }
.group.last { margin-left: auto; border: 0; }
.row { display: flex; height: 32px; align-items: center; }
.tb { width: 32px; height: 32px; flex: none; }
.tb svg { width: 24px; height: 24px; }
.tb.on { background: #cce0f6; width: 28px; height: 28px; margin: 2px; }
.dd { width: 11px; height: 32px; flex: none; justify-content: flex-start; padding-top: 2px; }
.dd svg { width: 9px; height: 10px; }

.combos { gap: 3px; padding: 0 1px 2px; }
.combo { display: grid; align-items: center; }
.combo select, .combo svg { grid-area: 1 / 1; }
.combo select {
  appearance: none; width: 100%; height: 25px; padding: 0 2px;
  border: 1px solid #7a7a7a; border-radius: 2px; background: #fff;
  font: inherit; color: #000;
}
.combo svg { width: 10px; height: 6px; justify-self: end; margin-right: 4px; pointer-events: none; }
.font { width: 92px; }
.size { width: 42px; }
.style { width: 128px; }

.glyph { font-size: 20px; color: #444; }
.b { font-weight: 800; }
.i { font-family: "DejaVu Serif", "Liberation Serif", serif; font-style: italic; font-size: 18px; }
.u { text-decoration: underline; text-underline-offset: 3px; font-size: 19px; }
.abc { font-size: 12px; color: #444; }
.abc s { text-decoration-color: #c03040; }
.note { font-size: 15px; font-weight: 700; color: #444; }
.note sup { font-size: 10px; line-height: 10px; color: #e03c3c; padding-bottom: 8px; }
.hyph { flex-direction: column; align-items: flex-start; padding-left: 4px; font-size: 14px; line-height: 12px; color: #444; }
.hyph span { display: block; height: 12px; white-space: nowrap; }
.hyph i { font-style: normal; font-weight: 700; color: #e03c3c; }

.main { display: flex; flex: 1; min-height: 0; }
.panel { display: flex; flex-direction: column; flex: none; width: 228px; border-right: 2px solid #7a7a7a; }
.panelhead { display: flex; align-items: center; gap: 4px; height: 17px; padding: 0 4px 0 5px; }
.panelhead h2 { margin-right: auto; font-weight: 700; }
.panelhead svg { width: 12px; height: 12px; }
.paneltools { display: flex; flex-direction: column; align-items: center; height: 69px; padding: 3px 2px 2px 0; border-bottom: 1px solid #777; }
.empty { flex: 1; padding: 14px 11px; font-size: 13px; color: #808080; }
.panelnav { display: flex; height: 35px; padding-left: 1px; border-top: 1px solid #777; }

.work { display: flex; flex-direction: column; flex: 1; min-width: 0; }
.docarea { display: flex; flex: 1; min-height: 0; }
.desk { display: flex; justify-content: center; flex: 1; min-width: 0; padding: 9px 2px 0 0; background: #f7f7f7; overflow: hidden; }
.page {
  position: relative; width: 818px; padding: 96px 95px 0;
  background: #fff; border: 1px solid #a0a0a0; border-bottom: 0;
}
.page::before, .page::after { content: ""; position: absolute; pointer-events: none; }
.page::before { inset: 0 94px 0 95px; border: dotted #b4b4b4; border-width: 0 1px; }
.page::after { inset: 95px 0 auto 0; border-top: 1px dotted #b4b4b4; }
.text { outline: 0; padding-left: 1px; }
.caret { display: block; width: 1px; height: 17px; background: #000; }

.scroll { display: flex; flex-direction: column; flex: none; width: 18px; background: #fff; }
.scroll button { height: 17px; width: 17px; border: 1px solid #b8b8b8; background: #fff; }
.scroll svg { width: 9px; height: 9px; }
.track { flex: 1; width: 17px; background: #e8e8e8; }
.thumb { height: 65%; background: #fff; border: 1px solid #b8b8b8; border-top: 0; }

.status { display: flex; flex: none; height: 24px; margin-top: 1px; border-top: 1px solid #777; background: #e4e4e4; }
.cell { display: flex; align-items: center; flex: none; padding: 0 5px; border-right: 1px solid #888; white-space: nowrap; }
.c1 { gap: 13px; width: 94px; }
.c2 { gap: 9px; width: 155px; padding-left: 6px; }
.c3 { width: 53px; }
.c4 { width: 37px; }
.c5 { width: 70px; }
.c6 { width: 105px; padding-left: 6px; }
.c7 { width: 44px; justify-content: center; }
.c8 { width: 75px; }
.c9 { width: 66px; padding-left: 6px; }
.book { width: 22px; height: 14px; }
.statusright { display: flex; align-items: center; margin-left: auto; padding-right: 1px; }
.view { width: 31px; height: 23px; }
.view svg { width: 18px; height: 16px; }
.sel { border: 1px solid #00f; background: #ccccff; }
.sel svg { height: 20px; }
.zoombtn { width: 32px; height: 23px; }
.zoombtn svg { width: 12px; height: 12px; }
.zoom { appearance: none; width: 138px; height: 15px; margin: 0 -3px; background: linear-gradient(#000090, #000090) center / 100% 1px no-repeat; }
.zoom::-webkit-slider-thumb { appearance: none; width: 4px; height: 15px; background: #000090; }
.pct { width: 50px; padding-left: 6px; }
.sbtn { width: 29px; height: 23px; }
.sbtn svg { width: 18px; height: 18px; }

.marks { position: absolute; inset: 0; overflow: hidden; pointer-events: none; }
.mark {
  position: absolute;
  transform: rotate(25deg); transform-origin: 0 100%;
  font: 900 60px/60px Lato, sans-serif;
  color: rgba(255, 255, 255, .8);
  -webkit-text-stroke: 1px #dcdcdc;
  text-shadow: 1px 1px 1px rgba(0, 0, 0, .1);
}
.m1 { left: 274px; top: 562px; }
.m2 { left: 719px; top: -121px; }
.m3 { left: 1525px; top: 222px; }
```
